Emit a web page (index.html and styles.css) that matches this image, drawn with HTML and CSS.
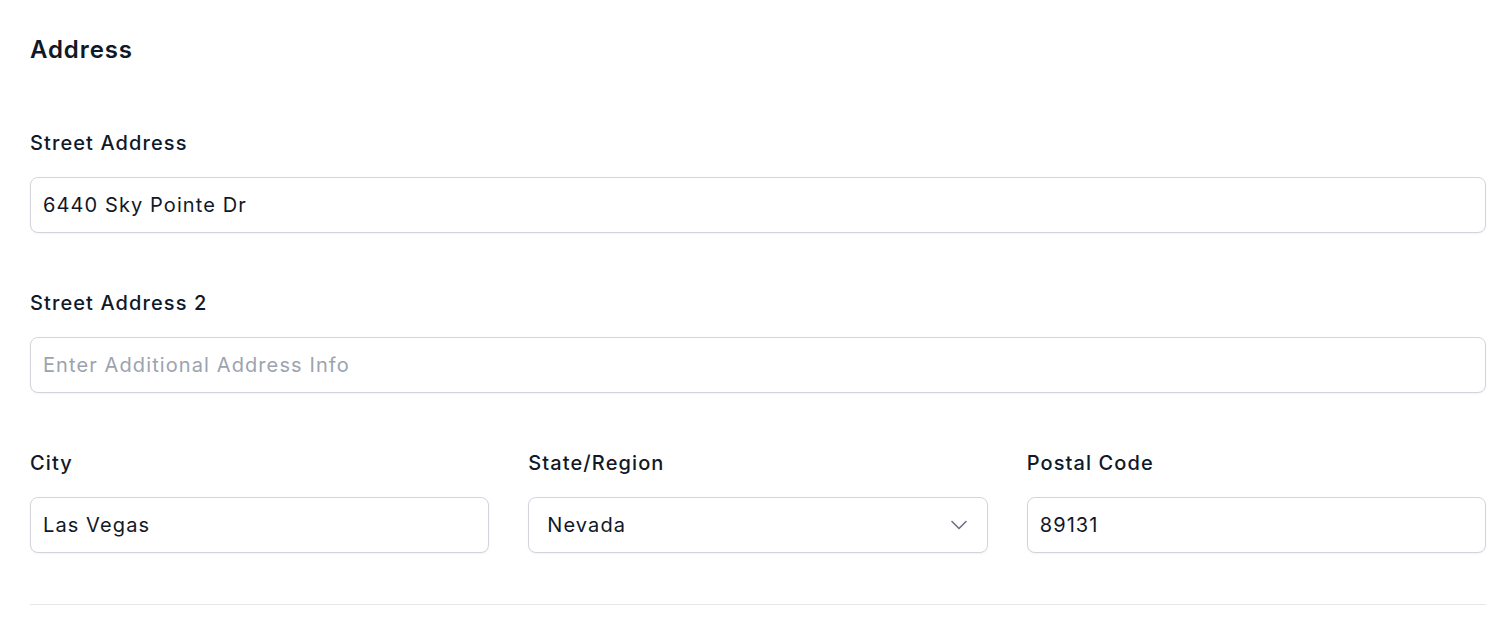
FILE: index.html
```html
<!DOCTYPE html>
<html>
<head>
<meta charset="utf-8">
<link rel="stylesheet" href="styles.css">
</head>
<body>
<main class="page">
  <h2 class="title">Address</h2>
  <div class="field field-first">
    <label class="label">Street Address</label>
    <div class="input">6440 Sky Pointe Dr</div>
  </div>
  <div class="field">
    <label class="label">Street Address 2</label>
    <div class="input placeholder">Enter Additional Address Info</div>
  </div>
  <div class="row">
    <div class="col">
      <label class="label">City</label>
      <div class="input">Las Vegas</div>
    </div>
    <div class="col">
      <label class="label">State/Region</label>
      <div class="input select">
        <span>Nevada</span>
        <svg class="chev" width="20" height="20" viewBox="0 0 20 20" fill="none"><path d="M3 6.5l7 7 7-7" stroke="#6b7280" stroke-width="1.6" stroke-linecap="round" stroke-linejoin="round"/></svg>
      </div>
    </div>
    <div class="col">
      <label class="label">Postal Code</label>
      <div class="input">89131</div>
    </div>
  </div>
  <hr class="divider">
</main>
</body>
</html>
```

FILE: styles.css
```css
* { box-sizing: border-box; }
html, body { margin: 0; padding: 0; background: #fff; }
body {
  font-family: Inter, "Noto Sans", sans-serif;
  color: #111827;
}
.page {
  padding: 35px 22px 0 30px;
}
.title {
  margin: 0;
  font-size: 24px;
  line-height: 30px;
  font-weight: 600;
  letter-spacing: 0.9px;
  color: #111827;
}
.field { margin-top: 56px; }
.field-first { margin-top: 64px; }
.label {
  display: block;
  font-size: 20px;
  line-height: 28px;
  font-weight: 500;
  letter-spacing: 1.1px;
  color: #111827;
  margin-bottom: 20px;
}
.input {
  height: 56px;
  border: 1px solid #d1d5db;
  border-radius: 8px;
  box-shadow: 0 1px 2px rgba(0,0,0,0.05);
  padding: 0 12px;
  display: flex;
  align-items: center;
  font-size: 20px;
  letter-spacing: 1.1px;
  color: #111827;
  background: #fff;
}
.placeholder { color: #9ca3af; }
.select {
  justify-content: space-between;
  padding-left: 18px;
  padding-right: 18px;
}
.row {
  margin-top: 56px;
  display: grid;
  grid-template-columns: 1fr 1fr 1fr;
  column-gap: 39px;
}
.divider {
  margin: 51px 0 0 0;
  border: 0;
  border-top: 1px solid #e5e7eb;
}
```
